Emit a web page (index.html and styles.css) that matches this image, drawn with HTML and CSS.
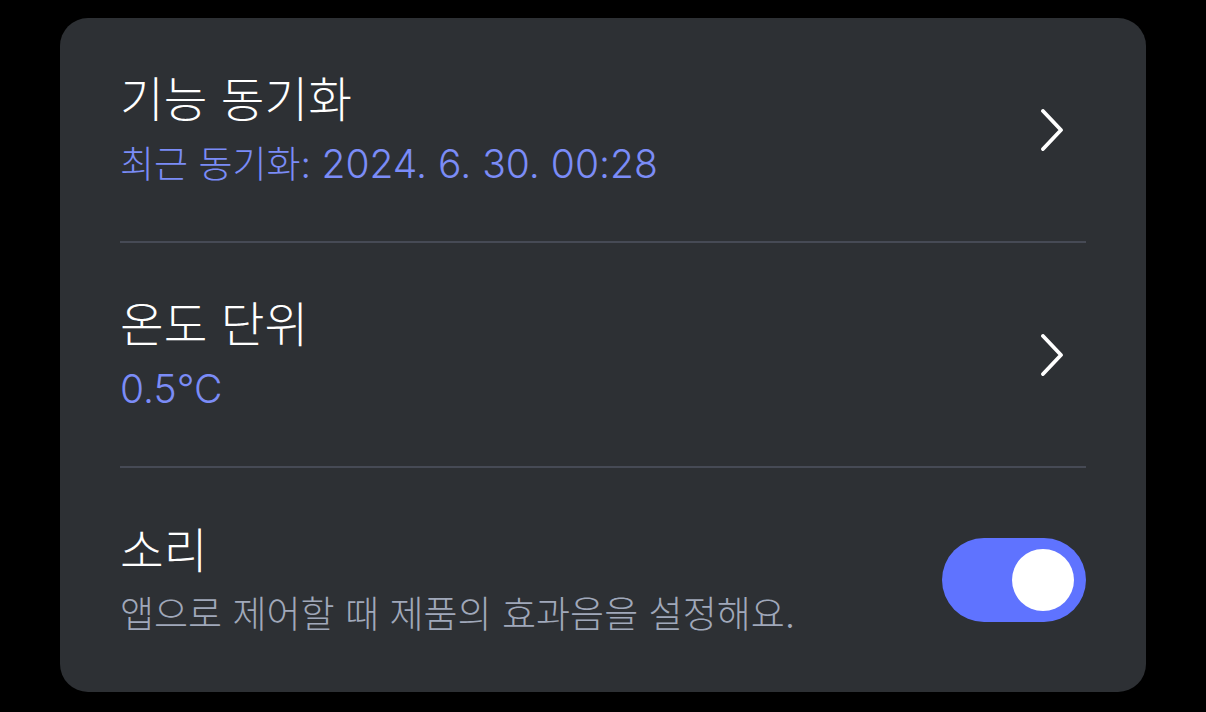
FILE: index.html
```html
<!DOCTYPE html>
<html lang="ko">
<head>
  <meta charset="UTF-8">
  <meta name="viewport" content="width=device-width, initial-scale=1.0">
  <title>설정</title>
  <link rel="stylesheet" href="styles.css">
</head>
<body>
  <div class="card">
    <div class="row">
      <div class="text">
        <div class="title">기능 동기화</div>
        <div class="sub accent">최근 동기화: <span class="num">2024. 6. 30. 00:28</span></div>
      </div>
      <svg class="chevron" width="24" height="42" viewBox="0 0 24 42">
        <path d="M3 2 L21 21 L3 40" fill="none" stroke="#fff" stroke-width="3.8" stroke-linecap="round" stroke-linejoin="round"/>
      </svg>
    </div>
    <div class="row">
      <div class="text">
        <div class="title">온도 단위</div>
        <div class="sub accent"><span class="num">0.5°C</span></div>
      </div>
      <svg class="chevron" width="24" height="42" viewBox="0 0 24 42">
        <path d="M3 2 L21 21 L3 40" fill="none" stroke="#fff" stroke-width="3.8" stroke-linecap="round" stroke-linejoin="round"/>
      </svg>
    </div>
    <div class="row">
      <div class="text">
        <div class="title">소리</div>
        <div class="sub muted">앱으로 제어할 때 제품의 효과음을 설정해요.</div>
      </div>
      <div class="toggle on"><span class="knob"></span></div>
    </div>
  </div>
</body>
</html>
```

FILE: styles.css
```css
html, body {
  margin: 0;
  padding: 0;
  background: #000;
}
body {
  padding: 18px 60px 0 60px;
  font-family: Inter, "Noto Sans CJK KR", sans-serif;
}
.card {
  background: #2d3034;
  border-radius: 28px;
  padding: 0 60px;
  height: 674px;
  box-sizing: border-box;
}
.row {
  display: flex;
  align-items: center;
  justify-content: space-between;
  height: 223px;
  border-bottom: 2px solid #464a55;
}
.row:last-child {
  border-bottom: none;
}
.text {
  padding-top: 6px;
}
.title {
  color: #fff;
  font-size: 47.5px;
  font-weight: 300;
  line-height: 64px;
}
.sub {
  font-size: 37px;
  font-weight: 300;
  line-height: 64px;
}
.num {
  font-size: 39px;
}
.accent {
  color: #7b8cf7;
}
.muted {
  color: #a0a8ba;
}
.chevron {
  margin-right: 22px;
  display: block;
}
.toggle {
  width: 144px;
  height: 84px;
  border-radius: 42px;
  background: #5f73ff;
  position: relative;
}
.knob {
  position: absolute;
  top: 11px;
  right: 12px;
  width: 62px;
  height: 62px;
  border-radius: 50%;
  background: #fff;
}
```
